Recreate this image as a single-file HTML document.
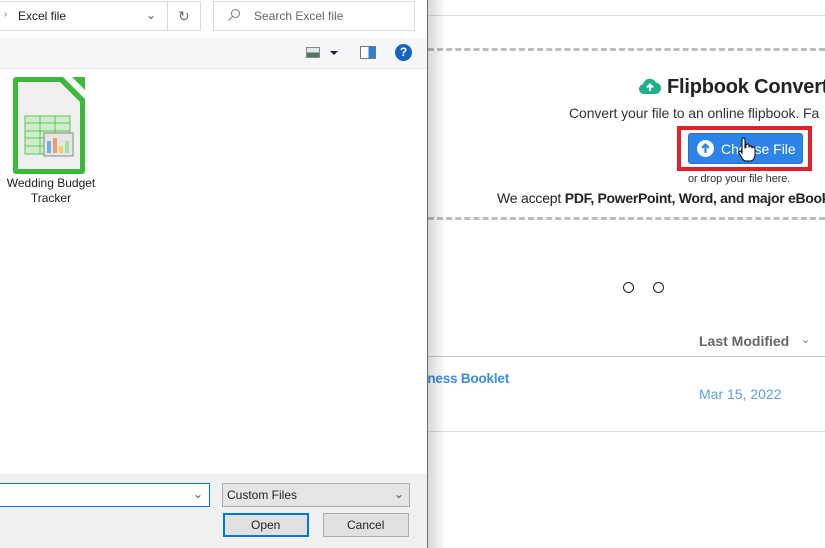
<!DOCTYPE html>
<html><head><meta charset="utf-8"><style>
*{margin:0;padding:0;box-sizing:border-box}
body{width:825px;height:548px;overflow:hidden;background:#fff;font-family:"Liberation Sans",sans-serif;position:relative}
.abs{position:absolute}
.dlg{left:0;top:0;width:428px;height:548px;background:#fff;border-right:1px solid #6e6e6e}
.shadow{left:428px;top:0;width:18px;height:548px;background:linear-gradient(to right,rgba(0,0,0,.16),rgba(0,0,0,0))}
.t{font-size:12px;color:#1e1e1e;white-space:nowrap}
</style></head><body>
<div class="abs" style="left:428px;top:15px;width:397px;height:1px;background:#dcdcdc"></div>
<div class="abs" style="left:428px;top:48px;width:397px;border-top:3px dashed #bdbdbd"></div>
<div class="abs" style="left:428px;top:217px;width:397px;border-top:3px dashed #bdbdbd"></div>
<svg class="abs" style="left:639px;top:77px" width="22" height="18" viewBox="0 0 22 18"><path d="M5 17a5 5 0 0 1-1-9.9A7 7 0 0 1 17 5.5 5.8 5.8 0 0 1 17 17z" fill="#1fb089"/><path d="M11 14V8M8 10.5l3-3 3 3" stroke="#fff" stroke-width="2" fill="none"/></svg>
<div class="abs" style="left:667px;top:76px;font-size:20px;letter-spacing:-0.2px;font-weight:bold;color:#222;white-space:nowrap">Flipbook Convert</div>
<div class="abs" style="left:569px;top:105px;font-size:14px;letter-spacing:-0.1px;color:#333;white-space:nowrap">Convert your file to an online flipbook. Fa</div>
<div class="abs" style="left:677px;top:126px;width:135px;height:45px;border:4px solid #e0202a"></div>
<div class="abs" style="left:688px;top:133px;width:115px;height:31px;background:#2d84e8;border-radius:3px;border:1px solid #2470cc"></div>
<svg class="abs" style="left:696px;top:139px" width="19" height="19" viewBox="0 0 19 19"><circle cx="9.5" cy="9.5" r="8.5" fill="#fff"/><path d="M9.5 14V6M6 9l3.5-3.5L13 9" stroke="#2d84e8" stroke-width="2.2" fill="none"/></svg>
<div class="abs" style="left:721px;top:141px;font-size:14px;color:#fff;white-space:nowrap">Choose File</div>
<svg class="abs" style="left:737px;top:137px" width="20" height="26" viewBox="0 0 20 26"><path d="M5 2.5a1.5 1.5 0 0 1 3 0V11l1-.5V8.5a1.5 1.5 0 0 1 3 0v2a1.5 1.5 0 0 1 3 0v1a1.5 1.5 0 0 1 3 0V18c0 3-2 6-5 6H9c-2 0-3-1-4-3l-3-5c-.6-1 .6-2.4 1.8-1.5L5 16z" fill="#fff" stroke="#000" stroke-width="1"/></svg>
<div class="abs" style="left:688px;top:173px;font-size:11px;letter-spacing:-0.1px;color:#333;white-space:nowrap">or drop your file here.</div>
<div class="abs" style="left:497px;top:190px;font-size:14px;letter-spacing:-0.2px;color:#222;white-space:nowrap">We accept <span style="font-weight:bold;letter-spacing:-0.3px">PDF, PowerPoint, Word, and major eBook</span></div>
<div class="abs" style="left:623px;top:282px;width:11px;height:11px;border:1.5px solid #222;border-radius:50%"></div>
<div class="abs" style="left:653px;top:282px;width:11px;height:11px;border:1.5px solid #222;border-radius:50%"></div>
<div class="abs" style="left:699px;top:333px;font-size:14px;font-weight:bold;color:#666;white-space:nowrap">Last Modified</div>
<div class="abs" style="left:801px;top:333px;font-size:11px;color:#777">&#8964;</div>
<div class="abs" style="left:428px;top:356px;width:397px;height:1px;background:#c8c8cc"></div>
<div class="abs" style="right:316px;top:371px;font-size:13.5px;letter-spacing:-0.2px;font-weight:bold;color:#3a8ce6;white-space:nowrap">Business Booklet</div>
<div class="abs" style="left:699px;top:386px;font-size:14px;color:#5f9be8;white-space:nowrap">Mar 15, 2022</div>
<div class="abs" style="left:428px;top:431px;width:397px;height:1px;background:#dcdcdc"></div>
<div class="abs shadow"></div>
<div class="abs dlg"></div>
<div class="abs" style="left:0;top:1px;width:201px;height:30px;border:1px solid #d9d9d9;border-left:none"></div>
<div class="abs" style="left:167px;top:1px;width:1px;height:30px;background:#d9d9d9"></div>
<div class="abs t" style="left:4px;top:9px;color:#777;font-size:10px">›</div>
<div class="abs t" style="left:18px;top:9px">Excel file</div>
<div class="abs t" style="left:146px;top:8px;color:#555">&#8964;</div>
<div class="abs t" style="left:178px;top:8px;color:#666;font-size:14px">&#8635;</div>
<div class="abs" style="left:213px;top:1px;width:202px;height:30px;border:1px solid #d9d9d9"></div>
<svg class="abs" style="left:227px;top:8px" width="14" height="14"><circle cx="8.5" cy="5.5" r="4" fill="none" stroke="#777"/><path d="M5.5 8.5L1.5 12.5" stroke="#777"/></svg>
<div class="abs t" style="left:254px;top:9px;color:#666">Search Excel file</div>
<div class="abs" style="left:0;top:38px;width:427px;height:31px;background:#f5f6f7;border-bottom:1px solid #e5e5e5"></div>
<div class="abs" style="left:306px;top:47px;width:14px;height:11px;border:1px solid #888;background:linear-gradient(#dfe6ee 50%,#4a7b5b 50%)"></div>
<div class="abs" style="left:330px;top:51px;width:0;height:0;border-left:4px solid transparent;border-right:4px solid transparent;border-top:4px solid #223"></div>
<div class="abs" style="left:360px;top:46px;width:16px;height:13px;border:1px solid #777;background:linear-gradient(to right,#fff 55%,#2b7fd6 55%)"></div>
<div class="abs" style="left:395px;top:44px;width:17px;height:17px;border-radius:50%;background:#1565c0;color:#fff;font-size:12px;font-weight:bold;text-align:center;line-height:17px">?</div>
<svg class="abs" style="left:13px;top:77px" width="74" height="97" viewBox="0 0 74 97"><path d="M3 0h53l16 16v78a3 3 0 0 1-3 3H3a3 3 0 0 1-3-3V3a3 3 0 0 1 3-3z" fill="#3cb83a"/><path d="M5 5h42l20 20v67H5z" fill="#efefef"/><path d="M59 0h12a1 1 0 0 1 1 1v12z" fill="#3cb83a"/><path d="M50 0l22 22v-6L56 0z" fill="#fff"/><rect x="12" y="39" width="45" height="38" fill="#cfeccc" stroke="#5bc65a"/><path d="M12 46h45M12 54h45M12 61h45M12 69h45M27 39v38M42 39v38" stroke="#5bc65a"/><rect x="31" y="56" width="29" height="23" fill="#e6e6e6" stroke="#888"/><rect x="34" y="64" width="4" height="12" fill="#6bb1e6"/><rect x="40" y="61" width="4" height="15" fill="#ef9a6a"/><rect x="46" y="69" width="4" height="7" fill="#f3d25b"/><rect x="52" y="64" width="4" height="12" fill="#9fe39b"/></svg>
<div class="abs t" style="left:6px;top:176px;width:90px;text-align:center;line-height:15px;white-space:normal">Wedding Budget Tracker</div>
<div class="abs" style="left:0;top:474px;width:427px;height:74px;background:#f0f0f0"></div>
<div class="abs" style="left:0;top:483px;width:210px;height:24px;background:#fff;border:1px solid #0078d7;border-left:none"></div>
<div class="abs t" style="left:193px;top:487px;color:#555">&#8964;</div>
<div class="abs" style="left:222px;top:483px;width:188px;height:24px;background:#e5e5e5;border:1px solid #adadad"></div>
<div class="abs t" style="left:227px;top:488px">Custom Files</div>
<div class="abs t" style="left:394px;top:487px;color:#555">&#8964;</div>
<div class="abs" style="left:223px;top:513px;width:86px;height:24px;background:#e1e1e1;border:2px solid #0078d7"></div>
<div class="abs t" style="left:251px;top:518px">Open</div>
<div class="abs" style="left:323px;top:513px;width:86px;height:24px;background:#e1e1e1;border:1px solid #adadad"></div>
<div class="abs t" style="left:347px;top:518px">Cancel</div>
</body></html>
